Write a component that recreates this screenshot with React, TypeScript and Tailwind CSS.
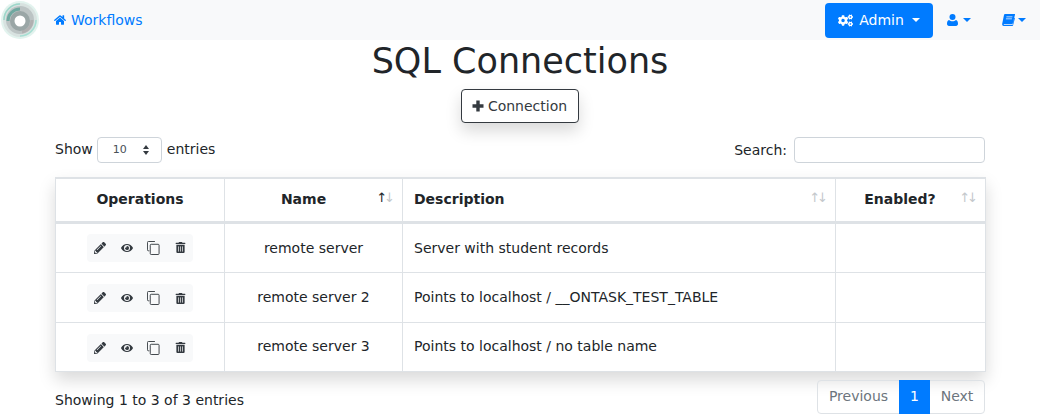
import { FaCogs, FaEye, FaHome, FaPencilAlt, FaTrashAlt } from 'react-icons/fa';

const rows = [
  { name: 'remote server', description: 'Server with student records', height: 'h-[50px]', cell: 'pt-[2px]', ops: '' },
  { name: 'remote server 2', description: 'Points to localhost / __ONTASK_TEST_TABLE', height: 'h-[50px]', cell: '', ops: 'pt-[2px]' },
  { name: 'remote server 3', description: 'Points to localhost / no table name', height: 'h-[49px]', cell: '', ops: 'pt-[2px]' },
];

function Caret() {
  return <span className="inline-block border-x-[4.8px] border-t-[4.8px] border-x-transparent border-t-current" />;
}

function Logo() {
  return (
    <svg viewBox="0 0 40 40" className="w-10 h-10 shrink-0">
      <circle cx="20" cy="20" r="19" fill="#e2f3ee" />
      <circle cx="20" cy="20" r="17" fill="#d8e2e0" />
      <path d="M4 20a16 16 0 0 1 16-16" fill="none" stroke="#9bd8ca" strokeWidth="1.500" />
      <path d="M36 20a16 16 0 0 1-16 16" fill="none" stroke="#a5e0d3" strokeWidth="1.500" />
      <circle cx="20" cy="20" r="14" fill="#bcc4c4" />
      <path d="M8 21a12 12 0 0 1 12-12" fill="none" stroke="#6fa8a0" strokeWidth="3" />
      <path d="M32 20a12 12 0 0 1-10 12" fill="none" stroke="#b0b0b0" strokeWidth="3" />
      <circle cx="20" cy="21" r="10" fill="#9aa6a6" />
      <circle cx="20" cy="21" r="5.500" fill="#ffffff" />
    </svg>
  );
}

function CopyIcon() {
  return (
    <svg viewBox="0 0 14 15" className="w-[13px] h-[14px]" fill="none" stroke="#343a40" strokeWidth="1">
      <path d="M2.500 10.500h-1a1 1 0 0 1-1-1v-8a1 1 0 0 1 1-1h7" />
      <rect x="3.500" y="3.500" width="9.500" height="11" rx="1" />
    </svg>
  );
}

function UserIcon() {
  return (
    <svg viewBox="0 0 11 12" className="w-[11px] h-[12px]" fill="currentColor">
      <circle cx="5.500" cy="3" r="3" />
      <path d="M2 6c1 .9 2.200 1.300 3.500 1.300S8 6.900 9 6c1.300.2 2 1.800 2 3.800 0 1.300-.8 2.200-2 2.200H2c-1.200 0-2-.9-2-2.200C0 7.800.7 6.200 2 6z" />
    </svg>
  );
}

function BookIcon() {
  return (
    <svg viewBox="0 0 13 12" className="w-[13px] h-[12px]" fill="currentColor">
      <path d="M3 0h9.500c.5 0 .6.400.5.800L10.700 9.500c-.2.500-.5.700-1 .7H2.400c-.7 0-.9.500-.4.700h8.500l1.800-7.200.7.400-2 7.400c-.1.300-.3.500-.7.500H1.600C.6 12 0 11 .2 9.800L2 1C2.100.4 2.500 0 3 0zM4.500 2.500l-.2.800h6l.2-.8zM4 4.500l-.2.800h6l.2-.8z" fillRule="evenodd" />
    </svg>
  );
}

function PlusIcon() {
  return (
    <svg viewBox="0 0 12 12" className="w-3 h-3" fill="currentColor">
      <path d="M4.300 .5h3.400v3.800h3.800v3.400H7.700v3.800H4.300V7.700H.5V4.300h3.800z" />
    </svg>
  );
}

function SortArrows({ active }: { active?: boolean }) {
  return (
    <span className="absolute right-[10px] top-[9px] text-[13px] leading-5 tracking-[-3px] font-normal">
      <span className={active ? 'text-[#212529]' : 'text-[#c4c8cc]'}>↑</span>
      <span className="text-[#c4c8cc]">↓</span>
    </span>
  );
}

function Operations() {
  return (
    <div className="inline-flex items-center h-[28px] w-[106px] rounded bg-[#f8f9fa] text-[#343a40] text-[12px]">
      <span className="w-[26px] flex justify-center"><FaPencilAlt /></span>
      <span className="w-[27px] flex justify-center"><FaEye /></span>
      <span className="w-[27px] flex justify-center"><CopyIcon /></span>
      <span className="w-[26px] flex justify-center"><FaTrashAlt className="text-[11px]" /></span>
    </div>
  );
}

export default function App() {
  return (
    <div className="w-[1040px] h-[415px] overflow-hidden bg-white text-[#212529] text-[14px] font-['DejaVu_Sans',sans-serif]">
      <nav className="flex items-center h-10">
        <Logo />
        <div className="flex-1 flex items-center h-full bg-[#f8f9fa] pl-[14px]">
          <a className="flex items-center gap-[5px] text-[#007bff]">
            <FaHome className="text-[12px]" />
            Workflows
          </a>
          <div className="ml-auto flex items-center">
            <button className="flex items-center gap-[6px] h-[35px] w-[108px] justify-center rounded bg-[#007bff] text-white">
              <FaCogs className="text-[15px]" />
              Admin
              <span className="ml-[2px] flex"><Caret /></span>
            </button>
            <span className="flex items-center gap-[5px] ml-[14px] text-[#007bff]">
              <UserIcon />
              <Caret />
            </span>
            <span className="flex items-center gap-[3px] ml-[31px] mr-[14px] text-[#007bff]">
              <BookIcon />
              <Caret />
            </span>
          </div>
        </div>
      </nav>

      <div className="px-[55px]">
        <h1 className="text-center text-[35px] leading-[43px] font-normal">SQL Connections</h1>
        <div className="flex justify-center mt-[6px]">
          <button className="flex items-center justify-center gap-[4px] pr-[1px] w-[118px] h-[34px] rounded border border-[#343a40] text-[#343a40] bg-white shadow-[0_8px_16px_rgba(0,0,0,0.15)]">
            <PlusIcon />
            Connection
          </button>
        </div>

        <div className="flex items-center justify-between mt-[14px] h-[26px]">
          <label className="flex items-center gap-[4px]">
            <span className="-mt-[2px]">Show</span>
            <span className="flex items-center justify-between w-[65px] h-[26px] rounded border border-[#ced4da] pl-[15px] pr-[12px] text-[11px] text-[#495057]">
              10
              <span className="flex flex-col gap-[2px]">
                <span className="border-x-[3.500px] border-b-[4px] border-x-transparent border-b-[#343a40]" />
                <span className="border-x-[3.500px] border-t-[4px] border-x-transparent border-t-[#343a40]" />
              </span>
            </span>
            <span className="-mt-[2px] ml-px">entries</span>
          </label>
          <label className="flex items-center gap-[7px]">
            Search:
            <span className="w-[191px] h-[26px] rounded border border-[#ced4da] bg-white" />
          </label>
        </div>

        <table className="mt-[14px] w-[930px] table-fixed border-collapse border-x border-[#dee2e6] shadow-[0_8px_16px_rgba(0,0,0,0.15)]">
          <colgroup>
            <col className="w-[169px]" />
            <col className="w-[178px]" />
            <col className="w-[433px]" />
            <col className="w-[150px]" />
          </colgroup>
          <thead>
            <tr className="h-[44px] border-t-2 border-b-[3px] border-[#dee2e6] font-bold">
              <th className="border-r border-[#dee2e6] text-center">Operations</th>
              <th className="relative border-x border-[#dee2e6] text-center pr-[20px]">Name<SortArrows active /></th>
              <th className="relative border-x border-[#dee2e6] text-left pl-[11px]">Description<SortArrows /></th>
              <th className="relative border-l border-[#dee2e6] text-center pr-[21px]">Enabled?<SortArrows /></th>
            </tr>
          </thead>
          <tbody>
            {rows.map((row) => (
              <tr key={row.name} className={`${row.height} border-b border-[#dee2e6]`}>
                <td className={`${row.ops} border-r border-[#dee2e6] text-center align-middle`}>
                  <div className="flex justify-center"><Operations /></div>
                </td>
                <td className={`${row.cell} border-x border-[#dee2e6] text-center`}>{row.name}</td>
                <td className={`${row.cell} border-x border-[#dee2e6] pl-[11px]`}>{row.description}</td>
                <td className="border-l border-[#dee2e6]" />
              </tr>
            ))}
          </tbody>
        </table>

        <div className="flex items-start justify-between mt-[8px]">
          <span className="mt-[10px]">Showing 1 to 3 of 3 entries</span>
          <div className="flex h-[34px] rounded border border-[#dee2e6] text-[#6c757d] items-stretch">
            <span className="w-[81px] flex items-center justify-center">Previous</span>
            <span className="w-[31px] -my-px flex items-center justify-center bg-[#007bff] text-white">1</span>
            <span className="w-[54px] flex items-center justify-center">Next</span>
          </div>
        </div>
      </div>
    </div>
  );
}
